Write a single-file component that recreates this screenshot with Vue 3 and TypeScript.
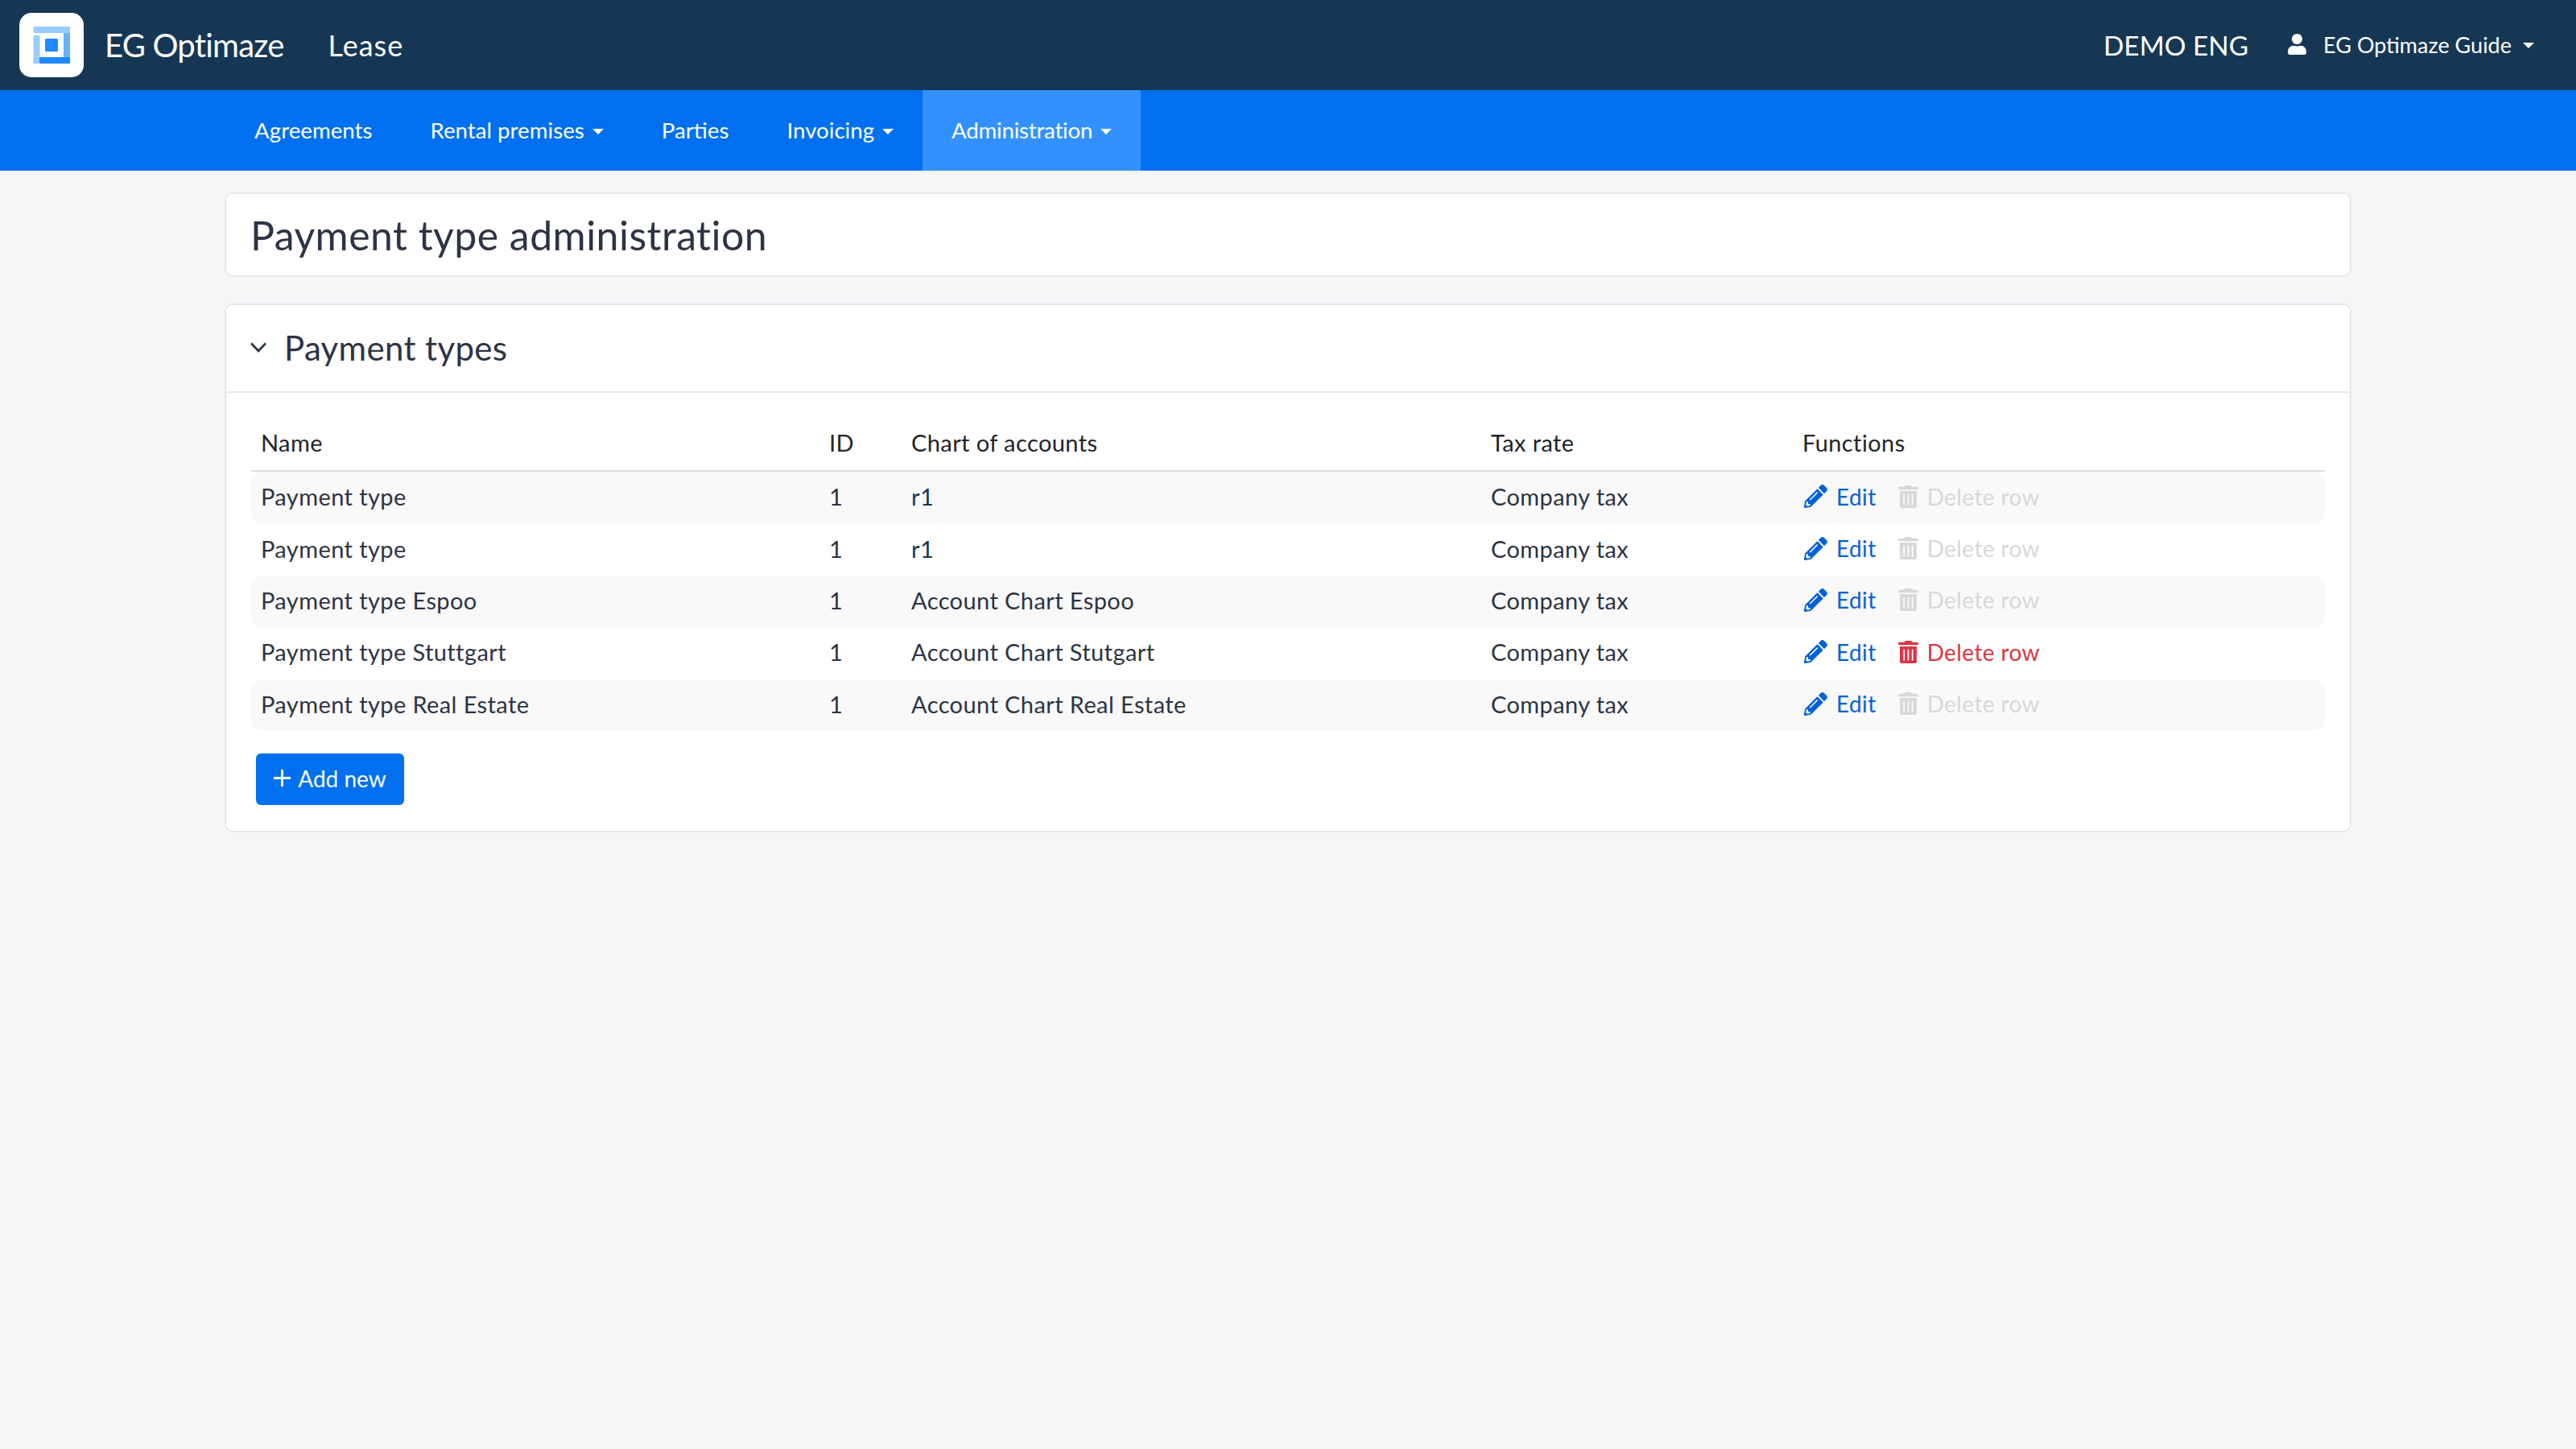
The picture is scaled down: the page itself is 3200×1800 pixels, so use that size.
<script setup lang="ts">
interface PaymentRow {
    name: string
    id: number
    chart: string
    chartLink?: boolean
    tax: string
    canDelete?: boolean
}

const navItems = [
    { label: 'Agreements' },
    { label: 'Rental premises', caret: true },
    { label: 'Parties' },
    { label: 'Invoicing', caret: true },
    { label: 'Administration', caret: true, active: true }
]

const rows: PaymentRow[] = [
    { name: 'Payment type', id: 1, chart: 'r1', chartLink: true, tax: 'Company tax' },
    { name: 'Payment type', id: 1, chart: 'r1', chartLink: true, tax: 'Company tax' },
    { name: 'Payment type Espoo', id: 1, chart: 'Account Chart Espoo', tax: 'Company tax' },
    { name: 'Payment type Stuttgart', id: 1, chart: 'Account Chart Stutgart', tax: 'Company tax', canDelete: true },
    { name: 'Payment type Real Estate', id: 1, chart: 'Account Chart Real Estate', tax: 'Company tax' }
]
</script>

<template>
    <div class="page">
        <header class="topbar">
            <div class="logo">
                <svg width="80" height="80" viewBox="0 0 80 80">
                    <rect width="80" height="80" rx="15" fill="#fff" />
                    <rect x="17.5" y="17" width="45.5" height="8" rx="1" fill="#99ccff" />
                    <rect x="17.5" y="28" width="8" height="35" rx="1" fill="#99ccff" />
                    <rect x="55" y="25" width="8" height="30" fill="#66b3ff" />
                    <rect x="25" y="55" width="38" height="8" rx="1" fill="#1f8aff" />
                    <rect x="32" y="32" width="16" height="16" rx="1.5" fill="#1f8aff" />
                </svg>
            </div>
            <span class="brand">EG Optimaze</span>
            <span class="module">Lease</span>
            <span class="demo">DEMO ENG</span>
            <svg class="user-icon" viewBox="0 0 448 512" width="23" height="26">
                <path fill="#fff" d="M224 256c70.7 0 128-57.3 128-128S294.7 0 224 0 96 57.3 96 128s57.3 128 128 128zm89.6 32h-16.7c-22.2 10.2-46.9 16-72.9 16s-50.6-5.8-72.9-16h-16.7C60.2 288 0 348.2 0 422.4V464c0 26.5 21.5 48 48 48h352c26.5 0 48-21.5 48-48v-41.6c0-74.2-60.2-134.4-134.4-134.4z" />
            </svg>
            <span class="user-name">EG Optimaze Guide</span>
            <i class="caret caret-user"></i>
        </header>

        <nav class="navbar">
            <a v-for="item in navItems" :key="item.label" class="nav-item" :class="{ active: item.active }">
                {{ item.label }}
                <i v-if="item.caret" class="caret"></i>
            </a>
        </nav>

        <main class="content">
            <section class="card title-card">
                <h1>Payment type administration</h1>
            </section>

            <section class="card">
                <div class="card-head">
                    <svg class="chevron" viewBox="0 0 20 13" width="20" height="13">
                        <path d="M1 1.5l9 9.5 9-9.5" fill="none" stroke="#2b3441" stroke-width="2.6" />
                    </svg>
                    <h2>Payment types</h2>
                </div>
                <div class="card-body">
                    <table class="types">
                        <colgroup>
                            <col style="width: 706px" />
                            <col style="width: 102px" />
                            <col style="width: 720px" />
                            <col style="width: 387px" />
                            <col />
                        </colgroup>
                        <thead>
                            <tr>
                                <th>Name</th>
                                <th>ID</th>
                                <th>Chart of accounts</th>
                                <th>Tax rate</th>
                                <th>Functions</th>
                            </tr>
                        </thead>
                        <tbody>
                            <tr v-for="(row, i) in rows" :key="i">
                                <td>{{ row.name }}</td>
                                <td>{{ row.id }}</td>
                                <td><a v-if="row.chartLink" class="chart-link">{{ row.chart }}</a><template v-else>{{ row.chart }}</template></td>
                                <td>{{ row.tax }}</td>
                                <td>
                                    <div class="functions">
                                        <a class="action edit">
                                            <svg viewBox="0 0 512 512" width="29" height="29">
                                                <path fill="currentColor" d="M497.9 142.1l-46.1 46.1c-4.7 4.7-12.3 4.7-17 0l-111-111c-4.7-4.7-4.7-12.3 0-17l46.1-46.1c18.7-18.7 49.1-18.7 67.9 0l60.1 60.1c18.8 18.7 18.8 49.1 0 67.9zM284.2 99.8L21.6 362.4.4 483.9c-2.9 16.4 11.4 30.6 27.8 27.8l121.5-21.3 262.6-262.6c4.7-4.7 4.7-12.3 0-17l-111-111c-4.8-4.7-12.4-4.7-17.1 0zM124.1 339.9c-5.5-5.5-5.5-14.3 0-19.8l154-154c5.5-5.5 14.3-5.5 19.8 0s5.5 14.3 0 19.8l-154 154c-5.5 5.5-14.3 5.5-19.8 0zM88 424h48v36.3l-64.5 11.3-31.1-31.1L51.7 376H88v48z" />
                                            </svg>
                                            Edit
                                        </a>
                                        <a class="action" :class="row.canDelete ? 'delete' : 'disabled'">
                                            <svg viewBox="0 0 448 512" width="25" height="28">
                                                <path fill="currentColor" d="M32 464a48 48 0 0 0 48 48h288a48 48 0 0 0 48-48V128H32zm272-256a16 16 0 0 1 32 0v224a16 16 0 0 1-32 0zm-96 0a16 16 0 0 1 32 0v224a16 16 0 0 1-32 0zm-96 0a16 16 0 0 1 32 0v224a16 16 0 0 1-32 0zM432 32H312l-9.4-18.7A24 24 0 0 0 281.1 0H166.8a23.72 23.72 0 0 0-21.4 13.3L136 32H16A16 16 0 0 0 0 48v32a16 16 0 0 0 16 16h416a16 16 0 0 0 16-16V48a16 16 0 0 0-16-16z" />
                                            </svg>
                                            Delete row
                                        </a>
                                    </div>
                                </td>
                            </tr>
                        </tbody>
                    </table>
                    <button class="add-btn">
                        <svg viewBox="0 0 21 21" width="21" height="21">
                            <path d="M10.5 0v21M0 10.5h21" stroke="#fff" stroke-width="3" fill="none" />
                        </svg>
                        Add new
                    </button>
                </div>
            </section>
        </main>
    </div>
</template>

<style>
html,
body {
    margin: 0;
    background: #f5f6f8;
}
</style>

<style scoped>
.page {
    min-height: 1800px;
    background: #f5f6f8;
    font-family: "Lato", "Noto Sans", sans-serif;
    font-size: 28px;
    color: #2c3444;
}

.topbar {
    height: 112px;
    box-sizing: border-box;
    background: #163754;
    color: #fff;
    display: flex;
    align-items: center;
    padding: 0 52px 0 24px;
}

.logo {
    width: 80px;
    height: 80px;
    margin-right: 26px;
}

.logo svg {
    display: block;
}

.brand {
    font-size: 40px;
    letter-spacing: -0.8px;
    margin-right: 55px;
    margin-bottom: 1px;
}

.module {
    font-size: 36px;
    letter-spacing: 1px;
}

.demo {
    margin-left: auto;
    font-size: 33.4px;
    margin-right: 49px;
    margin-bottom: 1px;
}

.user-icon {
    margin-right: 21px;
    margin-bottom: 2px;
}

.user-name {
    font-size: 27px;
    margin-bottom: 2px;
}

.caret {
    display: inline-block;
    width: 0;
    height: 0;
    border-left: 7px solid transparent;
    border-right: 7px solid transparent;
    border-top: 7px solid #fff;
}

.caret-user {
    margin-left: 14px;
}

.navbar {
    height: 100px;
    background: #0070f0;
    display: flex;
    padding-left: 280px;
}

.nav-item {
    display: flex;
    align-items: center;
    padding: 0 36px 2px;
    color: #fff;
    font-size: 27.7px;
}

.nav-item .caret {
    margin-top: 4px;
    margin-left: 10px;
}

.nav-item.active {
    background: #3391ff;
    letter-spacing: -0.25px;
}

.content {
    padding: 27px 279px 0 279px;
    display: flex;
    flex-direction: column;
    gap: 33px;
}

.card {
    background: #fff;
    border: 2px solid #e6e7ea;
    border-radius: 10px;
}

.title-card {
    height: 105px;
    box-sizing: border-box;
    display: flex;
    align-items: center;
    padding-left: 30px;
}

h1 {
    margin: 0;
    font-size: 50px;
    font-weight: 400;
    letter-spacing: 0.45px;
}

.card-head {
    height: 109px;
    box-sizing: border-box;
    border-bottom: 2px solid #e6e7ea;
    display: flex;
    align-items: center;
    padding: 0 0 2px 30px;
    gap: 22px;
}

h2 {
    margin: 0;
    font-size: 42px;
    font-weight: 400;
    letter-spacing: 0.35px;
}

.card-body {
    padding: 32px 31px 32px;
}

.types {
    width: 100%;
    table-layout: fixed;
    border-collapse: separate;
    border-spacing: 0;
    font-size: 29px;
    letter-spacing: 0.4px;
}

th {
    text-align: left;
    font-weight: 400;
    color: #212529;
    height: 59px;
    padding: 0 0 5px 12px;
    border-bottom: 2px solid #dddddd;
}

td {
    height: 61.4px;
    padding: 0 0 3px 12px;
    white-space: nowrap;
}

tbody tr:nth-child(odd) td {
    background: #f9f9f9;
}

tbody tr:nth-child(odd) td:first-child {
    border-radius: 10px 0 0 10px;
}

tbody tr:nth-child(odd) td:last-child {
    border-radius: 0 10px 10px 0;
}

.chart-link {
    color: #163754;
}

.functions {
    display: flex;
    gap: 27px;
    padding-left: 2px;
    font-size: 28px;
    letter-spacing: 0.4px;
}

.action {
    display: flex;
    align-items: center;
    gap: 11px;
}

.edit {
    color: #0062d6;
}

.delete {
    color: #dc3545;
}

.disabled {
    color: #d8d8d8;
}

.add-btn {
    margin: 28px 0 0 6px;
    height: 64px;
    width: 184px;
    border: none;
    border-radius: 6px;
    background: #0070f0;
    color: #fff;
    font: inherit;
    display: flex;
    align-items: center;
    justify-content: center;
    gap: 9px;
    padding: 0 0 2px;
}
</style>
